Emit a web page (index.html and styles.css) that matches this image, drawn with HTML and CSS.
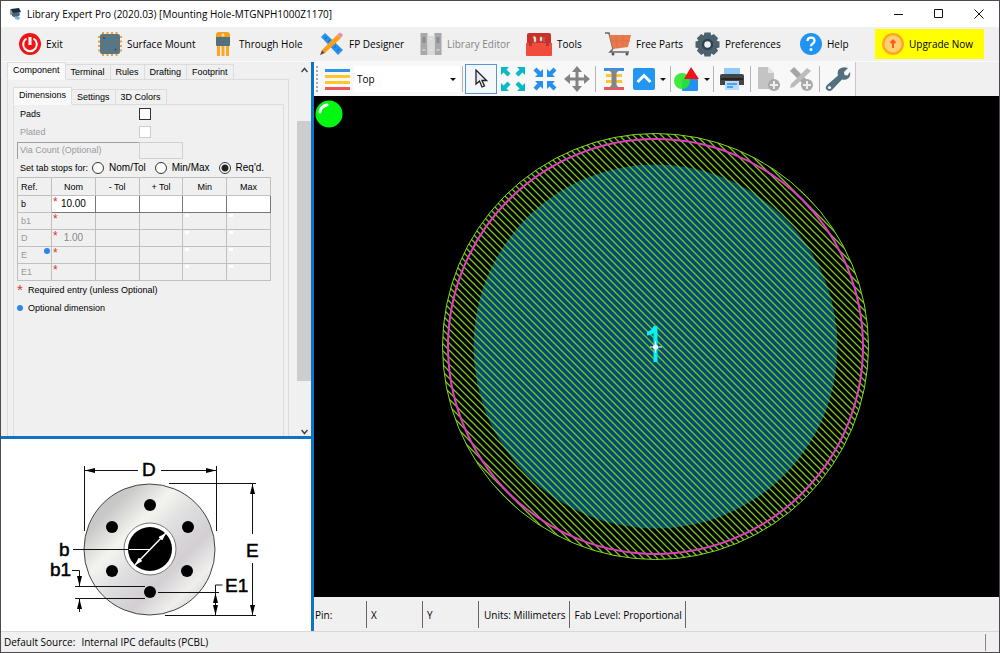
FILE: index.html
```html
<!DOCTYPE html>
<html lang="en">
<head>
<meta charset="utf-8">
<title>Library Expert Pro (2020.03) [Mounting Hole-MTGNPH1000Z1170]</title>
<link rel="stylesheet" href="styles.css">
</head>
<body>
<div class="window">
  <header class="titlebar">
    <svg class="app-icon" width="14" height="14" viewBox="0 0 14 14"><path d="M2 2l8-1 2 4-8 2z" fill="#1d2a36"/><path d="M3 6l7-1 1 3-4 3-4-2z" fill="#45647f"/><path d="M6 9l5 1-1 3-4-1z" fill="#7fb2dc"/><path d="M2 2v6" stroke="#333"/></svg>
    <h1 class="title">Library Expert Pro (2020.03) [Mounting Hole-MTGNPH1000Z1170]</h1>
    <div class="window-buttons">
      <button class="window-button" aria-label="Minimize"><svg width="10" height="10"><path d="M0 5.500H9" stroke="#111"/></svg></button>
      <button class="window-button" aria-label="Maximize"><svg width="10" height="10"><path d="M.5.5h8v8h-8z" fill="none" stroke="#111"/></svg></button>
      <button class="window-button" aria-label="Close"><svg width="10" height="10"><path d="M.5.5l9 9M9.500.5l-9 9" stroke="#111"/></svg></button>
    </div>
  </header>

  <nav class="main-toolbar">
    <button class="main-button"><svg width="22" height="22" viewBox="0 0 22 22"><circle cx="11" cy="11" r="11" fill="#f01414"/><path d="M7.500 5.500a6.800 6.800 0 1 0 7 0" fill="none" stroke="#fff" stroke-width="2"/><path d="M11 4v8" stroke="#fff" stroke-width="3"/></svg>Exit</button>
    <button class="main-button"><svg width="24" height="24" viewBox="0 0 24 24"><path d="M5 0v24M9.500 0v24M14 0v24M18.500 0v24M0 5h24M0 9.500h24M0 14h24M0 18.500h24" stroke="#f0a030" stroke-width="2"/><rect x="2" y="2" width="20" height="20" rx="2" fill="#587684"/><circle cx="6" cy="6" r="1" fill="#33505e"/><circle cx="17.500" cy="17.500" r="1" fill="#33505e"/></svg>Surface Mount</button>
    <button class="main-button wide-gap"><svg width="16" height="24" viewBox="0 0 16 24"><path d="M3.500 12v12M8 12v12M12.500 12v12" stroke="#ffa51f" stroke-width="3"/><path d="M1 6V3q0-3 3-3h8q3 0 3 3v3z" fill="#f5a01c"/><circle cx="8" cy="3" r="1.500" fill="#ffe2a8"/><path d="M1 5h14v8q0 1-1 1H2q-1 0-1-1z" fill="#54707e"/></svg>Through Hole</button>
    <button class="main-button"><svg width="24" height="24" viewBox="0 0 24 24"><path d="M1 5l4-4 18 17-5 5z" fill="#2692ee"/><path d="M7 5L5 7M10 8L8 10M16 14l-2 2M19 17l-2 2" stroke="#1260a8"/><path d="M17 3l4 3L5 21l-3-3z" fill="#ff9d16"/><path d="M2 18l3 3-5 2z" fill="#704b30"/><path d="M17 3l2-2q2-1 4 2l-2 3z" fill="#e88fa0"/></svg>FP Designer</button>
    <button class="main-button" disabled><svg width="22" height="22" viewBox="0 0 21 22"><path d="M0 0h7v22H0zM14 0h7v22h-7z" fill="#a8a8a8"/><path d="M7 3h7v19H7z" fill="#d9d9d9"/><path d="M2 4h3v6H2zM16 4h3v6h-3z" fill="#8c8c8c"/><path d="M2 17h3M9 17h3M16 17h3M9 6h3" stroke="#eee"/></svg>Library Editor</button>
    <button class="main-button"><svg width="26" height="23" viewBox="0 0 26 23"><path d="M1 2q0-2 2-2h20q2 0 2 2v9H1z" fill="#c83028"/><path d="M7 4q2-2 3 1v4H8V6zM14 4h2v4h-2zM18 4v5" fill="#eee" stroke="#aaa" stroke-width=".6"/><path d="M0 10h26v12q0 1-1 1H1q-1 0-1-1z" fill="#f04b3c"/><path d="M3 9h3v4H3zM20 9h3v4h-3z" fill="#b8352c"/></svg>Tools</button>
    <button class="main-button"><svg width="26" height="24" viewBox="0 0 26 24"><path d="M0 1h4l4 16M8 17l-3 3h19" fill="none" stroke="#666" stroke-width="1.500"/><path d="M4 3h22l-3 12-15 2z" fill="#e9784c"/><path d="M11 3l1 13M18 3v12M5 9h20" stroke="#d96a45" stroke-width=".7"/><circle cx="8" cy="22" r="1.500" fill="#555"/><circle cx="22" cy="22" r="1.500" fill="#555"/></svg>Free Parts</button>
    <button class="main-button"><svg width="25" height="25" viewBox="-12.500 -12.500 25 25"><g fill="#4b626e"><circle r="9.500"/><path id="tooth" d="M-3-12h6l1 4h-8z"/><use href="#tooth" transform="rotate(45)"/><use href="#tooth" transform="rotate(90)"/><use href="#tooth" transform="rotate(135)"/><use href="#tooth" transform="rotate(180)"/><use href="#tooth" transform="rotate(225)"/><use href="#tooth" transform="rotate(270)"/><use href="#tooth" transform="rotate(315)"/></g><circle r="4.500" fill="#f0f0f0" stroke="#2e4450" stroke-width="2.500"/></svg>Preferences</button>
    <button class="main-button"><svg width="22" height="22" viewBox="0 0 22 22"><circle cx="11" cy="11" r="11" fill="#2094f3"/><path d="M7.500 8q0-3.300 3.600-3.300 3.400 0 3.400 3 0 1.800-1.900 3-1.500 1-1.500 2.600" fill="none" stroke="#fff" stroke-width="2.200"/><circle cx="11" cy="16.500" r="1.500" fill="#fff"/></svg>Help</button>
    <button class="main-button upgrade"><svg width="22" height="22" viewBox="0 0 22 22"><circle cx="11" cy="11" r="11" fill="#ffa726"/><circle cx="11" cy="11" r="8.500" fill="#ffd070"/><path d="M11 15V9M8.500 10L11 7.500l2.500 2.500" fill="none" stroke="#ff5a22" stroke-width="2"/></svg>Upgrade Now</button>
  </nav>

  <main class="workspace">
    <div class="sidebar">
      <section class="form-pane">
        <div class="form-scroll">
          <div class="tabs" role="tablist">
            <button class="tab active" role="tab" aria-selected="true">Component</button><button class="tab" role="tab">Terminal</button><button class="tab" role="tab">Rules</button><button class="tab" role="tab">Drafting</button><button class="tab" role="tab">Footprint</button>
          </div>
          <div class="page outer-page">
            <div class="tabs inner-tabs" role="tablist">
              <button class="tab active" role="tab" aria-selected="true">Dimensions</button><button class="tab" role="tab">Settings</button><button class="tab" role="tab">3D Colors</button>
            </div>
            <div class="page inner-page">
              <div class="field"><label for="pads">Pads</label><input class="check" type="checkbox" id="pads"></div>
              <div class="field muted"><label for="plated">Plated</label><input class="check" type="checkbox" id="plated" disabled></div>
              <div class="field muted"><label class="sunken" for="via">Via Count (Optional)</label><input class="via" type="text" id="via" disabled></div>
              <div class="radio-row" role="radiogroup" aria-label="Set tab stops for">
                <span>Set tab stops for:</span>
                <label class="choice"><input class="radio" type="radio" name="stops">Nom/Tol</label>
                <label class="choice"><input class="radio" type="radio" name="stops">Min/Max</label>
                <label class="choice"><input class="radio" type="radio" name="stops" checked>Req'd.</label>
              </div>
              <table class="dims">
                <thead><tr><th class="ref">Ref.</th><th>Nom</th><th>- Tol</th><th>+ Tol</th><th>Min</th><th>Max</th></tr></thead>
                <tbody>
                  <tr class="live"><th class="ref">b</th><td class="req"><input class="cell" aria-label="b nominal" value="10.00"></td><td><input class="cell" aria-label="b minus tolerance"></td><td><input class="cell" aria-label="b plus tolerance"></td><td><input class="cell" aria-label="b min"></td><td><input class="cell" aria-label="b max"></td></tr>
                  <tr><th class="ref">b1</th><td class="req"></td><td></td><td></td><td class="mark"></td><td class="mark"></td></tr>
                  <tr><th class="ref">D</th><td class="req"><input class="cell" aria-label="D nominal" value="1.00" disabled></td><td></td><td></td><td class="mark"></td><td class="mark"></td></tr>
                  <tr><th class="ref optional">E</th><td class="req"></td><td></td><td></td><td class="mark"></td><td class="mark"></td></tr>
                  <tr><th class="ref">E1</th><td class="req"></td><td></td><td></td><td class="mark"></td><td class="mark"></td></tr>
                </tbody>
              </table>
              <div class="legend"><span class="star">*</span>Required entry (unless Optional)</div>
              <div class="legend"><span class="dot"></span>Optional dimension</div>
            </div>
          </div>
        </div>
        <div class="scrollbar">
          <svg width="7" height="6"><path d="M.5 5L3.500 1.500 6.500 5" fill="none" stroke="#444" stroke-width="1.500"/></svg>
          <div class="track"><div class="thumb"></div></div>
          <svg width="7" height="6"><path d="M.5 1L3.500 4.500 6.500 1" fill="none" stroke="#444" stroke-width="1.500"/></svg>
        </div>
      </section>
      <section class="diagram-pane">
        <svg class="diagram" viewBox="0 0 310 192" role="img" aria-label="Mounting hole dimensions">
          <defs>
            <linearGradient id="metal" x1="0" y1="0" x2="1" y2="1"><stop offset="0" stop-color="#bdbdbd"/><stop offset=".2" stop-color="#c9c9c9"/><stop offset=".36" stop-color="#f3f3ef"/><stop offset=".5" stop-color="#dedee0"/><stop offset=".66" stop-color="#d2ced2"/><stop offset=".8" stop-color="#efefed"/><stop offset="1" stop-color="#b8b8b8"/></linearGradient>
            <marker id="arrow" viewBox="0 0 10 5" refX="10" refY="2.500" markerWidth="10" markerHeight="5" markerUnits="userSpaceOnUse" orient="auto-start-reverse"><path d="M0 0l10 2.500L0 5z"/></marker>
            <marker id="white-arrow" viewBox="0 0 8 5" refX="8" refY="2.500" markerWidth="8" markerHeight="5" markerUnits="userSpaceOnUse" orient="auto-start-reverse"><path d="M0 0l8 2.500L0 5z" fill="#fff"/></marker>
          </defs>
          <circle cx="148.500" cy="110.500" r="65.500" fill="url(#metal)" stroke="#444"/>
          <circle cx="149" cy="110" r="26" fill="#fff" stroke="#777"/>
          <circle cx="149" cy="110" r="22"/>
          <g><circle cx="149" cy="66" r="6"/><circle cx="111" cy="88" r="6"/><circle cx="187" cy="88" r="6"/><circle cx="111" cy="132" r="6"/><circle cx="186" cy="132" r="6"/><circle cx="149" cy="153" r="6"/></g>
          <g class="ink"><path d="M83.500 27v65M215.500 27v65M168 44.500h87M164 176.500h91M72 110.500h56M74 147.500h70M74 159.500h70M157 153.500h61M214.500 153v-7h7"/>
          <path d="M137 31.500H84" marker-end="url(#arrow)"/><path d="M160 31.500h55" marker-end="url(#arrow)"/><path d="M251.500 95V45" marker-end="url(#arrow)"/><path d="M251.500 124v52" marker-end="url(#arrow)"/><path d="M71 131.500h7.500V147" marker-end="url(#arrow)"/><path d="M78.500 173v-13" marker-end="url(#arrow)"/><path d="M214.500 154v22" marker-start="url(#arrow)" marker-end="url(#arrow)"/></g>
          <path d="M128 110.500h21" stroke="#fff"/><path d="M134 126l31-32" stroke="#fff" stroke-width="1.500" marker-start="url(#white-arrow)" marker-end="url(#white-arrow)"/>
          <g class="dim-text"><text x="141" y="37">D</text><text x="245" y="118">E</text><text x="224" y="153">E1</text><text x="58" y="117">b</text><text x="49" y="137">b1</text></g>
        </svg>
      </section>
    </div>

    <section class="editor">
      <div class="tool-area">
        <div class="tool-strip">
          <span class="grip"></span>
          <div class="layer">
            <svg width="25" height="21" viewBox="0 0 25 21"><path d="M0 1.500h25" stroke="#3392e8" stroke-width="3"/><path d="M0 7.500h25M0 13.500h25" stroke="#ffc72b" stroke-width="3"/><path d="M0 19.500h25" stroke="#ed5757" stroke-width="3"/></svg>
            <select class="layer-select" aria-label="Layer"><option>Top</option><option>Bottom</option></select>
            <span class="caret"></span>
          </div>
          <span class="sep"></span>
          <button class="tool pressed" aria-label="Select"><svg width="14" height="20" viewBox="0 0 14 20"><path d="M2 1v14l3.500-3 2.500 6 2.500-1L8 11.500h4.500z" fill="#e8eaf2" stroke="#222" stroke-width="1.300"/></svg></button>
          <button class="tool" aria-label="Zoom to fit"><svg width="24" height="24" viewBox="0 0 24 24"><g fill="#08b9c6"><path id="out" d="M0 0h8L5.500 2.500l4 4-3 3-4-4L0 8z"/><use href="#out" transform="matrix(-1 0 0 1 24 0)"/><use href="#out" transform="matrix(1 0 0 -1 0 24)"/><use href="#out" transform="matrix(-1 0 0 -1 24 24)"/></g></svg></button>
          <button class="tool" aria-label="Zoom to center"><svg width="24" height="24" viewBox="0 0 24 24"><g fill="#2590ee"><path id="in" d="M10 10H2l2.500-2.500-4-4 3-3 4 4L10 2z"/><use href="#in" transform="matrix(-1 0 0 1 24 0)"/><use href="#in" transform="matrix(1 0 0 -1 0 24)"/><use href="#in" transform="matrix(-1 0 0 -1 24 24)"/></g></svg></button>
          <button class="tool" aria-label="Pan"><svg width="26" height="26" viewBox="0 0 26 26"><path d="M13 4v18M4 13h18" stroke="#838383" stroke-width="3"/><path d="M13 0l5 6H8zM13 26l5-6H8zM0 13l6-5v10zM26 13l-6-5v10z" fill="#838383"/></svg></button>
          <span class="sep"></span>
          <button class="tool" aria-label="Layers"><svg width="20" height="22" viewBox="0 0 20 22"><path d="M0 1.500h20" stroke="#3392e8" stroke-width="3"/><path d="M2 7.500h16M2 13.500h16" stroke="#ffc72b" stroke-width="3"/><path d="M0 20.500h20" stroke="#ed5757" stroke-width="3"/><path d="M5 2h10l-2.500 3v12l2.500 3H5l2.500-3V5z" fill="#858585"/></svg></button>
          <button class="tool drop" aria-label="View side"><svg width="22" height="22" viewBox="0 0 22 22"><rect width="22" height="22" rx="2" fill="#2196f3"/><path d="M4.500 14L11 7.500l6.500 6.500" fill="none" stroke="#fff" stroke-width="3"/></svg><span class="caret"></span></button>
          <span class="sep"></span>
          <button class="tool drop" aria-label="Shapes"><svg width="25" height="24" viewBox="0 0 25 24"><rect x="8" y="12" width="16" height="12" rx="1" fill="#2590ee"/><circle cx="8" cy="14" r="8" fill="#28e828" fill-opacity=".9"/><path d="M17 0l8 12H10z" fill="#f01414"/></svg><span class="caret"></span></button>
          <span class="sep"></span>
          <button class="tool" aria-label="Print"><svg width="24" height="24" viewBox="0 0 24 24"><path d="M4 1h16v9H4z" fill="#90caf9"/><path d="M2 7h20q2 0 2 2v9H0V9q0-2 2-2z" fill="#454545"/><path d="M1 12h22" stroke="#252525" stroke-width="2"/><path d="M5 14h14v9H5z" fill="#b9dcfa"/><path d="M7 17h10M7 20h6" stroke="#2590ee" stroke-width="1.500"/></svg></button>
          <span class="sep"></span>
          <button class="tool" aria-label="Add page" disabled><svg width="22" height="24" viewBox="0 0 22 24"><path d="M0 0h10l6 6v16H0z" fill="#c4c4c4"/><path d="M10 0v6h6z" fill="#e6e6e6"/><circle cx="16" cy="18" r="6" fill="#a9a9a9"/><path d="M16 14v8M12 18h8" stroke="#eee" stroke-width="2"/></svg></button>
          <button class="tool" aria-label="Add drafting item" disabled><svg width="24" height="24" viewBox="0 0 24 24"><path d="M1 4l4-4 17 17-4 4z" fill="#a5a5a5"/><path d="M18 1l4 3L5 20l-4 1 1-4z" fill="#bcbcbc"/><circle cx="18" cy="18" r="6" fill="#a9a9a9"/><path d="M18 14v8M14 18h8" stroke="#eee" stroke-width="2"/></svg></button>
          <span class="sep"></span>
          <button class="tool" aria-label="Settings"><svg width="26" height="26" viewBox="0 0 26 26"><path d="M23 2l-4 4 .5 3 3 .5L25 6q1 4-2 6.500-2.500 2-6 1L7 24q-2.500 2-5 0t0-5L13 9.500q-1.200-4 1.200-6.500Q18 0 23 2z" fill="#52707e"/><circle cx="4.500" cy="21.500" r="1.600" fill="#f4f4f4"/></svg></button>
        </div>
      </div>
      <div class="canvas">
        <svg class="board" viewBox="0 0 685 501" role="img" aria-label="Footprint view">
          <defs><pattern id="hatch" width="7" height="7" patternUnits="userSpaceOnUse"><path d="M-1-1l9 9M-1 6l2 2M6-1l2 2" stroke="#7cc81a" stroke-width="1.300"/></pattern></defs>
          <circle cx="341.500" cy="250.500" r="182" fill="#004c76"/>
          <circle cx="341.500" cy="250.500" r="213" fill="url(#hatch)" stroke="#7fd820"/>
          <circle cx="341.500" cy="250.500" r="207.500" fill="none" stroke="#e03cc4" stroke-width="2"/>
          <path d="M333 237.500q6 0 8.500-7V266" fill="none" stroke="#00f4f4" stroke-width="4"/>
          <path d="M341.500 245v12M336 251h12" stroke="#fff"/><circle cx="341.500" cy="251" r="2.500" fill="#fff"/>
        </svg>
        <svg class="indicator" width="28" height="28" viewBox="0 0 28 28"><circle cx="14" cy="14" r="13.500" fill="#00f810"/><path d="M5 12q1-6 7-7" fill="none" stroke="#fff" stroke-width="3" stroke-linecap="round"/></svg>
      </div>
      <div class="info-bar">
        <span class="info short">Pin:</span><span class="info">X</span><span class="info">Y</span><span class="info auto">Units: Millimeters</span><span class="info auto">Fab Level: Proportional</span>
      </div>
    </section>
  </main>
  <footer class="status"><span>Default Source:</span><span>Internal IPC defaults (PCBL)</span></footer>
</div>
</body>
</html>
```
FILE: styles.css
```css
* { box-sizing: border-box; }
body { margin: 0; font: 10px/16px "Open Sans", "Noto Sans", sans-serif; color: #000; }
button, input, select { font: inherit; color: inherit; }
button { border: 0; padding: 0; background: none; }
svg { display: block; flex: none; }

.window { display: flex; flex-direction: column; height: 100vh; border: 1px solid #4c4a4e; background: #f0f0f0; }
.titlebar { display: flex; align-items: center; flex: 0 0 26px; padding-left: 8px; background: #fff; }
.title { flex: 1; margin: 0 0 0 4px; font-size: 10px; font-weight: 400; white-space: nowrap; }
.window-buttons { display: flex; }
.window-button { display: flex; align-items: center; justify-content: center; width: 40px; height: 24px; }

.main-toolbar { display: grid; grid-template-columns: 79px 117px 105px 100px 106px 79px 90px 105px 75px 109px; flex: 0 0 35px; padding: 2px 0 2px 18px; border-bottom: 1px solid #fafafa; }
.main-button { display: flex; align-items: center; gap: 5px; white-space: nowrap; }
.main-button:disabled { color: #858585; }
.wide-gap { gap: 8px; }
.upgrade { gap: 5px; padding-left: 7px; background: #ff0; }

.workspace { display: grid; grid-template-columns: 310px 1fr; flex: 1; min-height: 0; }
.sidebar { display: flex; flex-direction: column; min-height: 0; }
.form-pane { display: flex; flex: 1; min-height: 0; font-family: "Liberation Sans", Arial, sans-serif; font-size: 9px; line-height: 14px; }
.form-scroll { display: flex; flex-direction: column; flex: 1; min-width: 0; overflow: hidden; padding: 0 7px 0 6px; }
.scrollbar { display: flex; flex-direction: column; align-items: center; width: 14px; padding: 5px 0 1px; }
.track { flex: 1; align-self: stretch; padding: 48px 0; }
.thumb { height: 100%; background: #cdcdcd; }

.tabs { display: flex; align-items: flex-end; margin-bottom: -1px; }
.tab { height: 16px; padding: 0 5px; border: 1px solid #dcdcdc; border-left-width: 0; background: #f0f0f0; }
.tab.active { position: relative; height: 18px; padding: 0 5px 2px; border-left-width: 1px; border-bottom-color: #f9f9f9; background: #f9f9f9; }
.page { border: 1px solid #dcdcdc; border-bottom: 0; }
.outer-page { flex: 1; display: flex; flex-direction: column; padding: 7px 4px 0 5px; margin-right: 1px; }
.inner-page { flex: 1; padding: 0 3px; }

.field { display: flex; align-items: center; height: 18px; }
.field label { width: 122px; padding-left: 3px; }
.field .sunken { height: 17px; border: solid #a0a0a0; border-width: 1px 0 0 1px; padding-left: 2px; }
.muted, .field .sunken { color: #9a9a9a; }
.check { appearance: none; width: 12px; height: 12px; margin: 0; border: 1px solid #333; background: #fff; }
.check:disabled { border-color: #ccc; }
.via { width: 44px; height: 17px; border: 1px solid #d0d0d0; background: #f0f0f0; }
.radio-row { display: flex; align-items: center; gap: 4px; height: 18px; padding-left: 3px; white-space: nowrap; }
.choice { display: flex; align-items: center; gap: 5px; margin-right: 5px; font-size: 10px; }
.radio { appearance: none; width: 12px; height: 12px; margin: 0; border: 1px solid #333; border-radius: 50%; background: #fff; }
.radio:checked { background: radial-gradient(circle, #222 3px, #fff 4px); }

.dims { width: 254px; table-layout: fixed; border-collapse: collapse; }
.dims th, .dims td { position: relative; height: 17px; padding: 0; border: 1px solid #c0c0c0; font-weight: 400; line-height: 14px; color: #999; }
.dims thead th { height: 18px; color: #000; }
.dims .ref { width: 34px; padding-left: 3px; text-align: left; }
.dims .live th, .dims .live td { color: #000; }
.dims .live td { border-color: #777; background: #fff; }
.cell { display: block; width: 100%; height: 14px; padding: 0; border: 0; background: none; font-size: 10px; text-align: center; }
.cell:disabled { color: #888; }
.req::before { content: "*"; position: absolute; left: 1px; top: 0; font-size: 12px; line-height: 12px; color: #e03030; }
.mark::before { content: ""; position: absolute; left: 2px; top: 1px; width: 4px; height: 3px; background: #fff; }
.optional::after { content: ""; position: absolute; right: 1px; top: 1px; width: 6px; height: 6px; border-radius: 50%; background: #2b86e8; }
.legend { display: flex; align-items: center; height: 18px; }
.star { width: 11px; font-size: 15px; color: #e03030; }
.dot { width: 6px; height: 6px; margin-right: 5px; border-radius: 50%; background: #2b86e8; }

.diagram-pane { flex: 0 0 195px; border-top: 3px solid #0f74c6; background: #fff; }
.diagram { width: 100%; height: 100%; font-family: "Liberation Sans", Arial, sans-serif; }
.ink { fill: none; stroke: #111; }
.dim-text { font-size: 19px; stroke: #000; stroke-width: .5px; }

.editor { display: flex; flex-direction: column; min-width: 0; min-height: 0; border-left: 3px solid #0f74c6; }
.tool-area { flex: 0 0 34px; display: flex; }
.tool-strip { display: flex; align-items: center; padding: 1px 1px 1px 2px; border-right: 1px solid #c8c8c8; background: #f8f8f8; }
.grip { width: 9px; height: 26px; background: radial-gradient(circle at 1px 1px, #aaa 1px, transparent 1px) 0 0 / 9px 4px; }
.layer { display: flex; align-items: center; position: relative; width: 135px; }
.layer-select { flex: 1; appearance: none; height: 26px; margin-left: 4px; padding: 0 3px; border: 0; background: #fff; }
.layer .caret { position: absolute; right: 4px; pointer-events: none; }
.caret { border: 3px solid transparent; border-top-color: #111; border-bottom: 0; }
.sep { width: 1px; height: 26px; margin: 0 2px; background: #b4b4b4; }
.tool { display: flex; align-items: center; justify-content: center; width: 32px; height: 30px; }
.drop { width: 38px; gap: 5px; }
.pressed { border: 1px solid #5795d5; background: #f4f7fc; }
.canvas { position: relative; flex: 1; min-height: 0; background: #000; }
.board { width: 100%; height: 100%; }
.indicator { position: absolute; left: 1px; top: 4px; }
.info-bar { display: flex; flex: 0 0 34px; padding: 4px 0 3px; }
.info { display: flex; align-items: center; width: 56px; padding-left: 4px; border-right: 1px solid #666; white-space: nowrap; }
.info.short { width: 53px; padding-left: 1px; }
.info.auto { width: auto; padding: 0 3px 0 5px; }
.status { display: flex; align-items: center; gap: 6px; flex: 0 0 21px; padding-left: 3px; border-top: 1px solid #d8d8d8; }
.status::after { content: ""; width: 1px; height: 17px; margin: 0 13px 0 auto; background: #888; }
```
